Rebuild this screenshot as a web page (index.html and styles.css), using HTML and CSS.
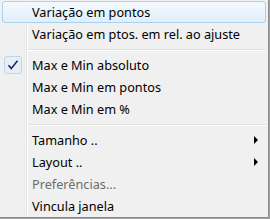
FILE: index.html
```
<!DOCTYPE html>
<html>
<head>
<meta charset="utf-8">
<link rel="stylesheet" href="styles.css">
</head>
<body>
<div class="menu">
  <div class="item hover"><span class="icon"></span><span class="label">Variação em pontos</span></div>
  <div class="item"><span class="icon"></span><span class="label">Variação em ptos. em rel. ao ajuste</span></div>
  <div class="sep"><span class="line"></span></div>
  <div class="item"><span class="icon"><span class="checkbox"><svg width="12" height="12" viewBox="0 0 12 12"><path d="M1.5 6.2 L4.3 9.6 L10.5 1.8" fill="none" stroke="#1b2a6b" stroke-width="1.6"/></svg></span></span><span class="label">Max e Min absoluto</span></div>
  <div class="item"><span class="icon"></span><span class="label">Max e Min em pontos</span></div>
  <div class="item"><span class="icon"></span><span class="label">Max e Min em %</span></div>
  <div class="sep"><span class="line"></span></div>
  <div class="item"><span class="icon"></span><span class="label">Tamanho ..</span><span class="arrow"></span></div>
  <div class="item"><span class="icon"></span><span class="label">Layout ..</span><span class="arrow"></span></div>
  <div class="item disabled"><span class="icon"></span><span class="label">Preferências...</span></div>
  <div class="item"><span class="icon"></span><span class="label">Vincula janela</span></div>
</div>
</body>
</html>
```
FILE: styles.css
```
html, body {
  margin: 0;
  padding: 0;
  background: #a0a0a0;
}
.menu {
  width: 269px;
  height: 218px;
  box-sizing: border-box;
  padding-top: 1px;
  border-right: 1px solid #8c8c8c;
  border-bottom: 1px solid #8c8c8c;
  background:
    linear-gradient(to right, transparent 26px, #e2e3e3 26px, #e2e3e3 27px, #ffffff 27px, #ffffff 28px, transparent 28px),
    #f0f0f0;
  font-family: "Noto Sans", "DejaVu Sans", sans-serif;
  font-size: 12.7px;
  color: #000;
}
.item {
  height: 22px;
  margin: 0 2px 0 2px;
  display: flex;
  align-items: center;
  box-sizing: border-box;
  border: 1px solid transparent;
  border-radius: 3px;
}
.item.hover {
  border-color: #a8d2ee;
  background: linear-gradient(to bottom, #f3f9fe, #e0eefb);
}
.icon {
  width: 20px;
  height: 20px;
  margin-right: 9px;
  display: flex;
  align-items: center;
  justify-content: center;
}
.checkbox {
  width: 18px;
  height: 18px;
  box-sizing: border-box;
  border: 1px solid #bcd6ee;
  border-radius: 3px;
  background: #e7eef6;
  display: flex;
  align-items: center;
  justify-content: center;
}
.label {
  white-space: nowrap;
}
.disabled .label {
  color: #6d6d6d;
}
.arrow {
  margin-left: auto;
  margin-right: 7px;
  width: 0;
  height: 0;
  border-top: 4px solid transparent;
  border-bottom: 4px solid transparent;
  border-left: 4px solid #000;
}
.sep {
  height: 9px;
  margin: 0 2px 0 28px;
  display: flex;
  flex-direction: column;
  justify-content: center;
}
.line {
  display: block;
  border-top: 1px solid #e0e0e0;
  height: 0;
  border-bottom: 1px solid #fff;
}
```
